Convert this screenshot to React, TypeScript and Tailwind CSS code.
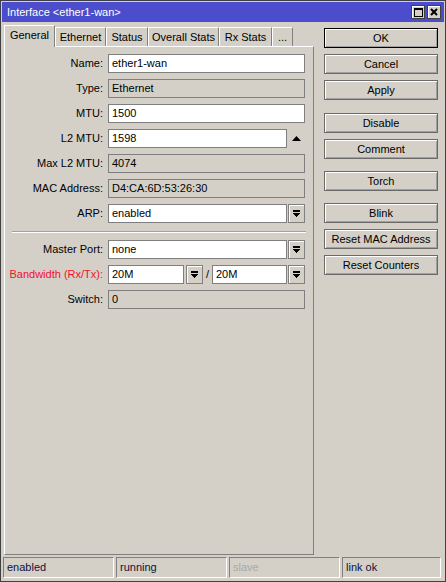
import { ReactNode } from 'react';

const tabs = [
  { label: 'General', w: 'w-[51px]', active: true },
  { label: 'Ethernet', w: 'w-[51px]' },
  { label: 'Status', w: 'w-[42px]' },
  { label: 'Overall Stats', w: 'w-[71px]' },
  { label: 'Rx Stats', w: 'w-[53px]' },
  { label: '...', w: 'w-[21px]' },
];

function Field({
  value,
  disabled,
  className = 'w-[197px]',
}: {
  value: string;
  disabled?: boolean;
  className?: string;
}) {
  return (
    <div
      className={`h-[19px] flex items-center px-[3px] border border-[#7f7f7f] ${
        disabled ? 'bg-[#d4d0c8]' : 'bg-white'
      } ${className}`}
    >
      {value}
    </div>
  );
}

function DropBtn() {
  return (
    <div className="w-[17px] h-[19px] shrink-0 flex items-center justify-center bg-[#d4d0c8] border border-[#808080] shadow-[inset_1px_1px_0_#fff]">
      <svg width="7" height="8" viewBox="0 0 7 8" shapeRendering="crispEdges">
        <rect x="0" y="0" width="7" height="2" fill="#000" />
        <polygon points="0,3 7,3 3.5,7" fill="#000" />
      </svg>
    </div>
  );
}

function Row({ label, red, children }: { label: string; red?: boolean; children: ReactNode }) {
  return (
    <div className="flex items-center h-[19px]">
      <div className={`w-[98px] text-right ${red ? 'text-[#f0102c]' : ''}`}>{label}</div>
      <div className="ml-[5px] flex items-center">{children}</div>
    </div>
  );
}

function Btn({ children, primary, mt = '' }: { children: ReactNode; primary?: boolean; mt?: string }) {
  return (
    <div
      className={`h-[20px] w-[114px] flex items-center justify-center pt-px bg-[#d4d0c8] border ${
        primary ? 'border-black' : 'border-[#6a6a6a]'
      } shadow-[inset_1px_1px_0_#fff,inset_-1px_-1px_0_#a0a0a0] ${mt}`}
    >
      {children}
    </div>
  );
}

function StatusCell({ text, w, muted }: { text: string; w: string; muted?: boolean }) {
  return (
    <div
      className={`h-[21px] ${w} flex items-center px-[3px] border border-t-[#808080] border-l-[#808080] border-r-white border-b-white ${
        muted ? 'text-[#a8a8a8]' : 'text-[#10103a]'
      }`}
    >
      {text}
    </div>
  );
}

export default function App() {
  return (
    <div className="w-[446px] h-[582px] bg-[#d4d0c8] border border-[#404040] p-px flex flex-col font-['Liberation_Sans',Arial,sans-serif] text-[11px] text-black leading-none select-none overflow-hidden">
      {/* title bar */}
      <div className="h-[20px] shrink-0 bg-[#4b4dcc] flex items-center pl-[5px] pr-[3px]">
        <span className="text-white flex-1 pt-px">Interface &lt;ether1-wan&gt;</span>
        <div className="flex gap-[2px]">
          <div className="w-[14px] h-[14px] bg-[#d4d0c8] border border-[#404040] shadow-[inset_1px_1px_0_#fff] flex items-center justify-center">
            <svg width="9" height="9" viewBox="0 0 9 9" shapeRendering="crispEdges">
              <rect x="0.5" y="1" width="8" height="7.5" fill="none" stroke="#000" />
              <rect x="0" y="0" width="9" height="2" fill="#000" />
            </svg>
          </div>
          <div className="w-[14px] h-[14px] bg-[#d4d0c8] border border-[#404040] shadow-[inset_1px_1px_0_#fff] flex items-center justify-center">
            <svg width="8" height="8" viewBox="0 0 8 8">
              <path d="M1 1 L7 7 M7 1 L1 7" stroke="#000" strokeWidth="2" />
            </svg>
          </div>
        </div>
      </div>

      <div className="flex flex-1 min-h-0">
        {/* left: tabs + panel */}
        <div className="ml-[2px] w-[310px] flex flex-col">
          <div className="mt-[3px] h-[21px] flex items-end">
            {tabs.map((t) =>
              t.active ? (
                <div
                  key={t.label}
                  className={`${t.w} h-[22px] -mb-px relative z-10 bg-[#d4d0c8] border-l border-t border-r border-l-white border-t-white border-r-[#808080] flex items-center justify-center pb-[2px]`}
                >
                  {t.label}
                </div>
              ) : (
                <div
                  key={t.label}
                  className={`${t.w} h-[19px] bg-[#d4d0c8] border-l border-t border-r border-l-white border-t-white border-r-[#808080] flex items-center justify-center`}
                >
                  {t.label}
                </div>
              )
            )}
          </div>
          <div className="flex-1 mb-[2px] border border-t-white border-l-white border-r-[#808080] border-b-[#808080]">
            <div className="pt-[7px] flex flex-col gap-[6px]">
              <Row label="Name:">
                <Field value="ether1-wan" />
              </Row>
              <Row label="Type:">
                <Field value="Ethernet" disabled />
              </Row>
              <Row label="MTU:">
                <Field value="1500" />
              </Row>
              <Row label="L2 MTU:">
                <Field value="1598" className="w-[179px]" />
                <div className="w-[18px] flex justify-center">
                  <svg width="9" height="5" viewBox="0 0 9 5">
                    <polygon points="0,5 9,5 4.5,0" fill="#000" />
                  </svg>
                </div>
              </Row>
              <Row label="Max L2 MTU:">
                <Field value="4074" disabled />
              </Row>
              <Row label="MAC Address:">
                <Field value="D4:CA:6D:53:26:30" disabled />
              </Row>
              <Row label="ARP:">
                <Field value="enabled" className="w-[179px] mr-px" />
                <DropBtn />
              </Row>
              <div className="mt-[2px] mb-px ml-[7px] w-[294px] h-[2px] border-t border-t-[#a0a0a0] border-b border-b-white" />
              <Row label="Master Port:">
                <Field value="none" className="w-[179px] mr-px" />
                <DropBtn />
              </Row>
              <Row label="Bandwidth (Rx/Tx):" red>
                <Field value="20M" className="w-[76px] mr-[2px]" />
                <DropBtn />
                <div className="w-[9px] text-center">/</div>
                <Field value="20M" className="w-[75px] mr-px" />
                <DropBtn />
              </Row>
              <Row label="Switch:">
                <Field value="0" disabled />
              </Row>
            </div>
          </div>
        </div>

        {/* right: buttons */}
        <div className="ml-[10px] pt-[6px] flex flex-col gap-[6px]">
          <Btn primary>OK</Btn>
          <Btn>Cancel</Btn>
          <Btn>Apply</Btn>
          <Btn mt="mt-[7px]">Disable</Btn>
          <Btn>Comment</Btn>
          <Btn mt="mt-[6px]">Torch</Btn>
          <Btn mt="mt-[6px]">Blink</Btn>
          <Btn>Reset MAC Address</Btn>
          <Btn>Reset Counters</Btn>
        </div>
      </div>

      {/* status bar */}
      <div className="h-[21px] mb-[2px] ml-px flex gap-[2px] shrink-0">
        <StatusCell text="enabled" w="w-[111px]" />
        <StatusCell text="running" w="w-[111px]" />
        <StatusCell text="slave" w="w-[111px]" muted />
        <StatusCell text="link ok" w="w-[99px]" />
      </div>
    </div>
  );
}
